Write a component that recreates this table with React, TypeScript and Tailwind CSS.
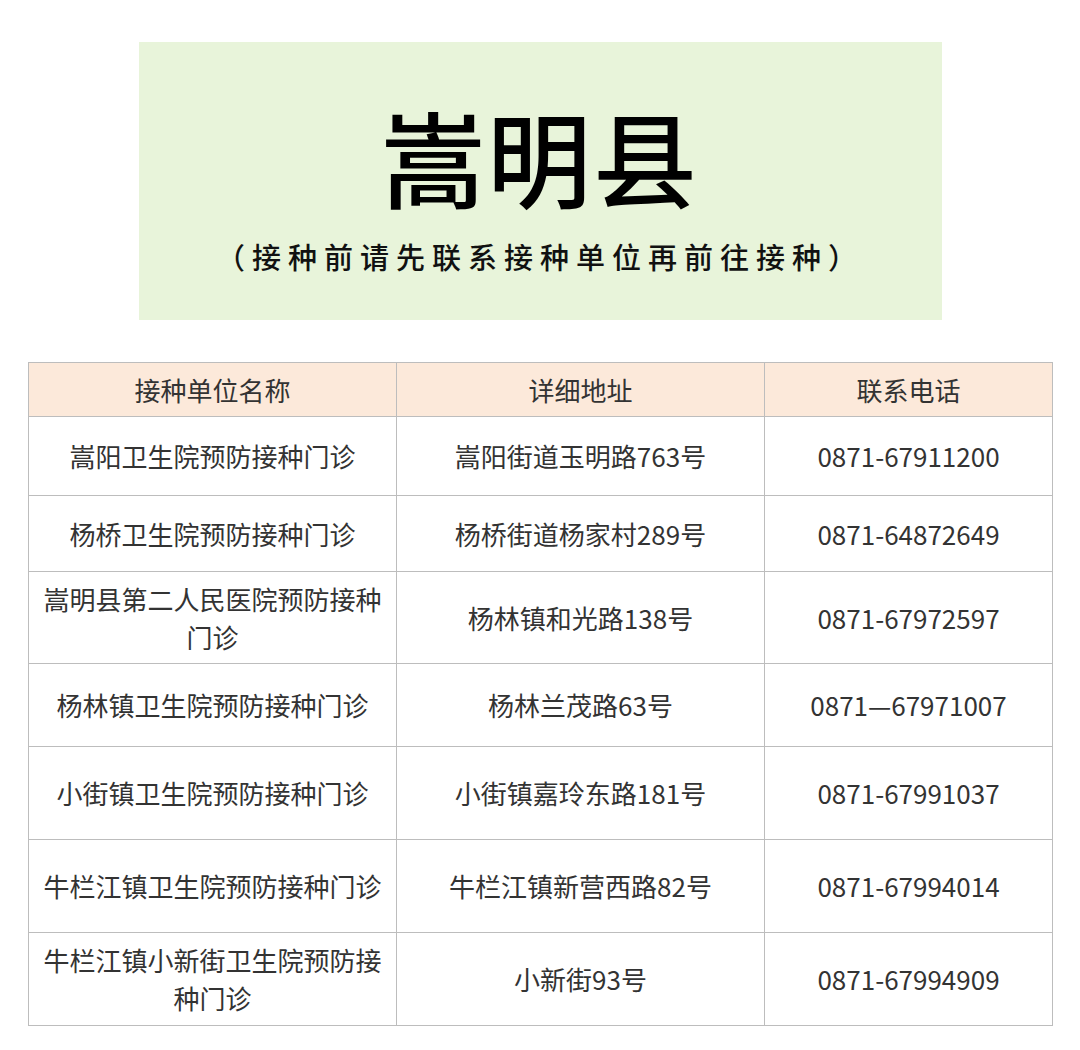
import React from "react";

const rows: { name: string; addr: string; tel: string; h: string }[] = [
  { name: "嵩阳卫生院预防接种门诊", addr: "嵩阳街道玉明路763号", tel: "0871-67911200", h: "h-[79px]" },
  { name: "杨桥卫生院预防接种门诊", addr: "杨桥街道杨家村289号", tel: "0871-64872649", h: "h-[76px]" },
  { name: "嵩明县第二人民医院预防接种门诊", addr: "杨林镇和光路138号", tel: "0871-67972597", h: "h-[92px]" },
  { name: "杨林镇卫生院预防接种门诊", addr: "杨林兰茂路63号", tel: "0871—67971007", h: "h-[83px]" },
  { name: "小街镇卫生院预防接种门诊", addr: "小街镇嘉玲东路181号", tel: "0871-67991037", h: "h-[93px]" },
  { name: "牛栏江镇卫生院预防接种门诊", addr: "牛栏江镇新营西路82号", tel: "0871-67994014", h: "h-[93px]" },
  { name: "牛栏江镇小新街卫生院预防接种门诊", addr: "小新街93号", tel: "0871-67994909", h: "h-[93px]" },
];

const App = () => {
  return (
    <div className="w-[1080px] h-[1050px] bg-white font-['Noto_Sans_CJK_SC',sans-serif] text-[#222]">
      <div className="pt-[42px] flex justify-center">
        <div className="w-[803px] h-[278px] bg-[#e8f4da] flex flex-col items-center">
          <div className="mt-[62px] text-[104px] leading-[104px] font-medium tracking-[2px] text-black">嵩明县</div>
          <div className="mt-[30px] text-[29px] leading-[36px] font-medium tracking-[7px] text-[#111]">（接种前请先联系接种单位再前往接种）</div>
        </div>
      </div>

      {/* Table */}
      <div className="mt-[42px] ml-[28px] w-[1024px]">
        <table className="w-full border-collapse table-fixed text-[26px] leading-[38px] text-[#333]">
          <colgroup>
            <col className="w-[368px]" />
            <col className="w-[368px]" />
            <col className="w-[288px]" />
          </colgroup>
          <thead>
            <tr className="h-[54px] bg-[#fce9da]">
              <th className="border border-[#bdbdbd] font-normal">接种单位名称</th>
              <th className="border border-[#bdbdbd] font-normal">详细地址</th>
              <th className="border border-[#bdbdbd] font-normal">联系电话</th>
            </tr>
          </thead>
          <tbody>
            {rows.map((r, i) => (
              <tr key={i} className={r.h}>
                <td className="border border-[#bdbdbd] text-center px-[10px]">{r.name}</td>
                <td className="border border-[#bdbdbd] text-center">{r.addr}</td>
                <td className="border border-[#bdbdbd] text-center">{r.tel}</td>
              </tr>
            ))}
          </tbody>
        </table>
      </div>
    </div>
  );
};

export default App;
